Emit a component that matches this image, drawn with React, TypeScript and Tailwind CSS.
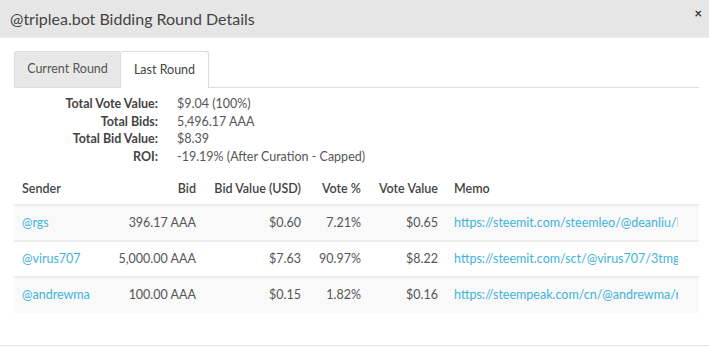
import React from 'react';

type Bid = {
  sender: string;
  bid: string;
  usd: string;
  pct: string;
  value: string;
  memo: string;
};

const bids: Bid[] = [
  { sender: '@rgs', bid: '396.17 AAA', usd: '$0.60', pct: '7.21%', value: '$0.65', memo: 'https://steemit.com/steemleo/@deanliu/bidbot-round-details' },
  { sender: '@virus707', bid: '5,000.00 AAA', usd: '$7.63', pct: '90.97%', value: '$8.22', memo: 'https://steemit.com/sct/@virus707/3tmgu-something-long' },
  { sender: '@andrewma', bid: '100.00 AAA', usd: '$0.15', pct: '1.82%', value: '$0.16', memo: 'https://steempeak.com/cn/@andrewma/rest-of-link' },
];

const summary = [
  ['Total Vote Value:', '$9.04 (100%)'],
  ['Total Bids:', '5,496.17 AAA'],
  ['Total Bid Value:', '$8.39'],
  ['ROI:', '-19.19% (After Curation - Capped)'],
];

export default function App() {
  return (
    <div className="w-[709px] h-[347px] bg-white overflow-hidden font-['Lato',sans-serif] text-[#555]">
      {/* Modal header */}
      <div className="h-[38px] bg-[#e6e6e6] border-b border-[#ececec] flex items-center justify-between pl-[10px] pr-[7px]">
        <h4 className="text-[16px] text-[#444] leading-none">@triplea.bot Bidding Round Details</h4>
        <span className="text-[13px] font-bold text-[#333] leading-none -mt-[10px]">×</span>
      </div>

      <div className="px-[14px] pt-[13px]">
        {/* Tabs */}
        <div className="flex border-b border-[#ddd] w-[685px] h-[37px] text-[12.5px]">
          <div className="w-[106px] bg-[#e8e8e8] border-t border-l border-[#ddd] rounded-tl-[3px] flex items-center justify-center text-[#555]">
            Current Round
          </div>
          <div className="w-[89px] bg-white border border-b-0 border-[#ddd] rounded-t-[3px] -mb-px flex items-center justify-center text-[#444]">
            Last Round
          </div>
        </div>

        {/* Summary */}
        <div className="mt-[7px] text-[12.5px] leading-[17.5px]">
          {summary.map(([label, value]) => (
            <div key={label} className="flex">
              <div className="w-[144px] text-right font-bold text-[#444]">{label}</div>
              <div className="pl-[19px] text-[#555]">{value}</div>
            </div>
          ))}
        </div>

        {/* Bids table */}
        <table className="mt-[9px] w-[685px] table-fixed border-collapse text-[12.5px]">
          <colgroup>
            <col className="w-[96px]" />
            <col className="w-[94px]" />
            <col className="w-[105px]" />
            <col className="w-[60px]" />
            <col className="w-[77px]" />
            <col />
          </colgroup>
          <thead>
            <tr className="h-[31px] text-[#444]">
              <th className="text-left font-semibold pl-2">Sender</th>
              <th className="text-right font-semibold pr-2">Bid</th>
              <th className="text-right font-semibold pr-2">Bid Value (USD)</th>
              <th className="text-right font-semibold pr-2">Vote %</th>
              <th className="text-right font-semibold pr-2">Vote Value</th>
              <th className="text-left font-semibold pl-2">Memo</th>
            </tr>
          </thead>
          <tbody>
            {bids.map((b, i) => (
              <tr key={b.sender} className={`h-[36px] border-t-2 border-[#ececec] ${i % 2 === 0 ? 'bg-[#f9f9f9]' : 'bg-white'}`}>
                <td className="pl-2 text-[#3fb3d9]">{b.sender}</td>
                <td className="text-right pr-2">{b.bid}</td>
                <td className="text-right pr-2">{b.usd}</td>
                <td className="text-right pr-2">{b.pct}</td>
                <td className="text-right pr-2">{b.value}</td>
                <td className="pl-2">
                  <div className="w-[224px] overflow-hidden whitespace-nowrap text-[#3fb3d9]">{b.memo}</div>
                </td>
              </tr>
            ))}
          </tbody>
        </table>
      </div>

      <div className="mt-[32px] border-t border-[#e5e5e5]" />
    </div>
  );
}
